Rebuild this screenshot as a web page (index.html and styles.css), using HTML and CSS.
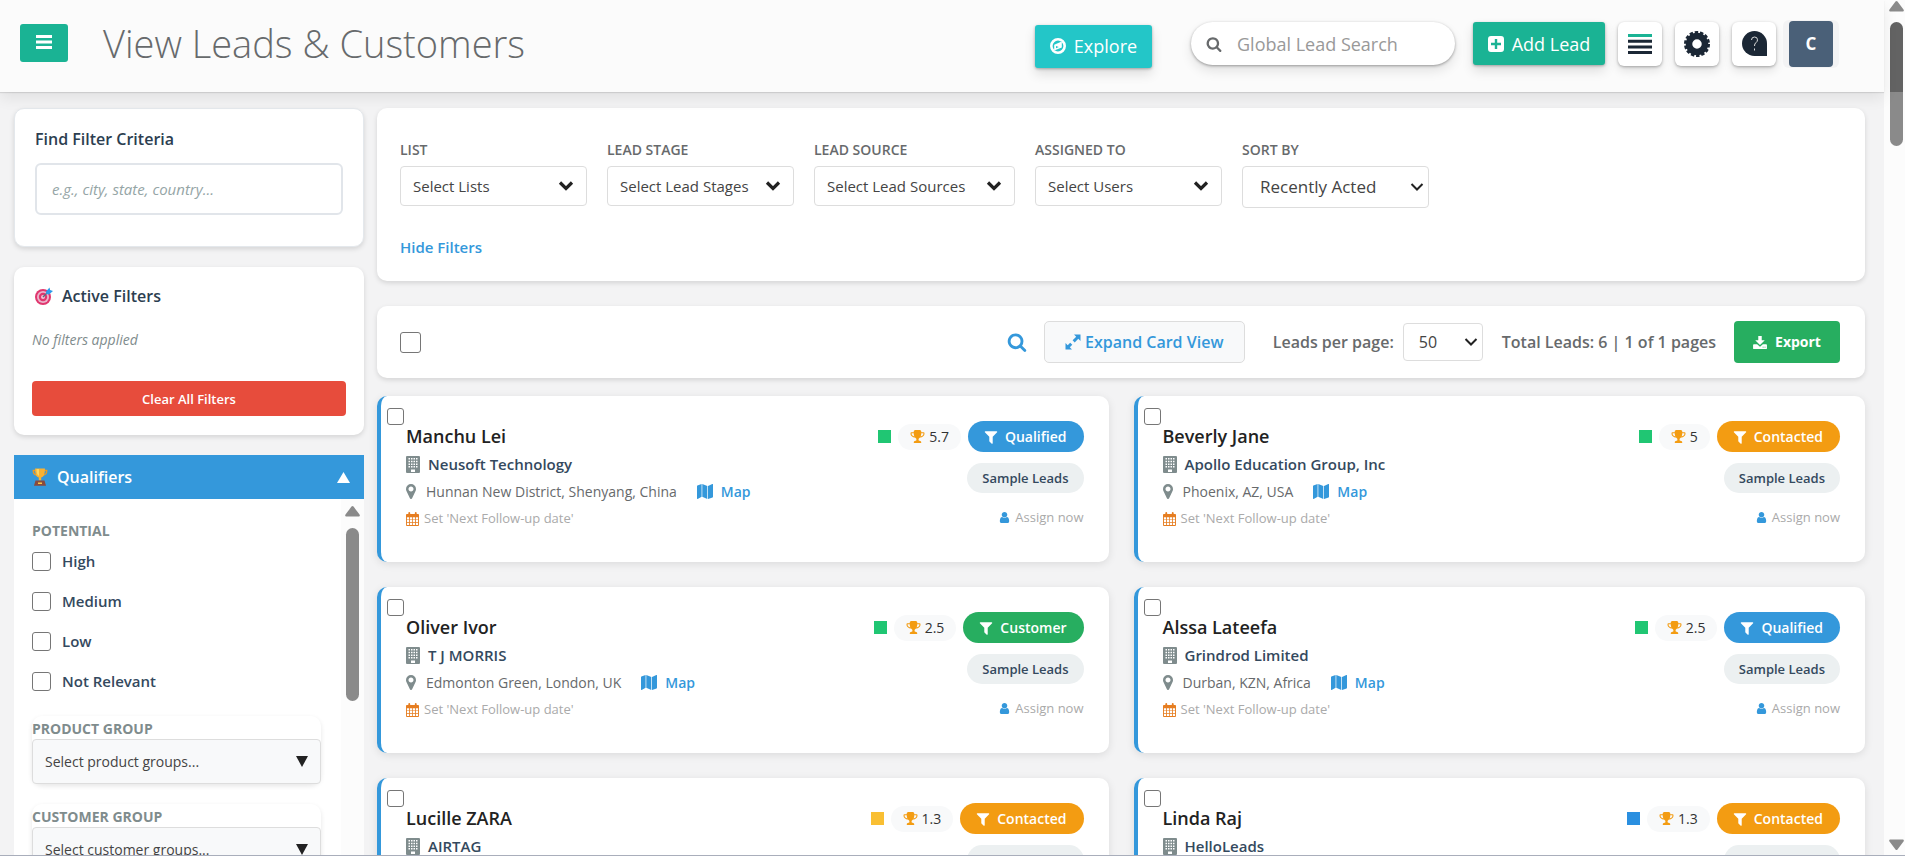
FILE: index.html
```html
<!DOCTYPE html>
<html lang="en">

<head>
  <meta charset="utf-8">
  <title>View Leads &amp; Customers</title>
  <link rel="stylesheet" href="styles.css">
</head>

<body>
  <!-- Icon sprite -->
  <svg class="sprite">
    <symbol id="i-search" viewBox="0 0 1792 1792"><path d="M1216 832q0-185-131.5-316.5t-316.5-131.5-316.5 131.5-131.5 316.5 131.5 316.5 316.5 131.5 316.5-131.5 131.5-316.5zm512 832q0 52-38 90t-90 38q-54 0-90-38l-343-342q-179 124-399 124-143 0-273.5-55.5t-225-150-150-225-55.5-273.5 55.5-273.5 150-225 225-150 273.5-55.5 273.5 55.5 225 150 150 225 55.5 273.5q0 220-124 399l343 343q37 37 37 90z"/></symbol>
    <symbol id="i-filter" viewBox="0 0 1792 1792"><path d="M1595 295q17 41-14 70l-493 493v742q0 42-39 59-13 5-25 5-27 0-45-19l-256-256q-19-19-19-45v-486l-493-493q-31-29-14-70 17-39 59-39h1280q42 0 59 39z"/></symbol>
    <symbol id="i-user" viewBox="0 0 1792 1792"><path d="M1536 1399q0 109-62.5 187t-150.5 78h-854q-88 0-150.5-78t-62.5-187q0-85 8.5-160.5t31.5-152 58.5-131 94-89 134.5-34.5q131 128 313 128t313-128q76 0 134.5 34.5t94 89 58.5 131 31.5 152 8.5 160.5zm-256-887q0 159-112.5 271.5t-271.5 112.5-271.5-112.5-112.5-271.5 112.5-271.5 271.5-112.5 271.5 112.5 112.5 271.5z"/></symbol>
    <symbol id="i-pin" viewBox="384 128 1024 1536"><path d="M1152 640q0-106-75-181t-181-75-181 75-75 181 75 181 181 75 181-75 75-181zm256 0q0 109-33 179l-364 774q-16 33-47.5 52t-67.5 19-67.5-19-46.5-52l-365-774q-33-70-33-179 0-212 150-362t362-150 362 150 150 362z"/></symbol>
    <symbol id="i-trophy" viewBox="0 0 1792 1792"><path d="M522 883q-74-162-74-371h-256v96q0 78 94.5 162t235.5 113zm1078-275v-96h-256q0 209-74 371 141-29 235.5-113t94.5-162zm128-128v128q0 71-41.5 143t-112 130-173 97.5-215.5 44.5q-42 54-95 95-38 34-52.5 72.5t-14.5 89.5q0 54 30.5 91t97.5 37q75 0 133.5 45.5t58.5 114.5v64q0 14-9 23t-23 9h-832q-14 0-23-9t-9-23v-64q0-69 58.5-114.5t133.5-45.5q67 0 97.5-37t30.5-91q0-51-14.5-89.5t-52.5-72.5q-53-41-95-95-113-5-215.5-44.5t-173-97.5-112-130-41.5-143v-128q0-40 28-68t68-28h288v-96q0-66 47-113t113-47h576q66 0 113 47t47 113v96h288q40 0 68 28t28 68z"/></symbol>
    <symbol id="i-building" viewBox="0 0 14 17"><path fill-rule="evenodd" d="M1 0h12q1 0 1 1v15q0 1-1 1H1q-1 0-1-1V1q0-1 1-1zM2.500 2v1.500h1.500V2zM5 2v1.500h1.500V2zM7.500 2v1.500H9V2zM10 2v1.500h1.500V2zM2.500 4.700v1.500h1.500V4.700zM5 4.700v1.500h1.500V4.700zM7.500 4.700v1.500H9V4.700zM10 4.700v1.500h1.500V4.700zM2.500 7.400v1.500h1.500V7.400zM5 7.400v1.500h1.500V7.400zM7.500 7.400v1.500H9V7.400zM10 7.400v1.500h1.500V7.400zM2.500 10v1.500h1.500V10zM5 10v1.500h1.500V10zM7.500 10v1.500H9V10zM10 10v1.500h1.500V10zM5 13.500V16h4v-2.500z"/></symbol>
    <symbol id="i-calendar" viewBox="0 0 14 15"><path fill-rule="evenodd" d="M1 2h1.500V1q0-1 1-1t1 1v1h5V1q0-1 1-1t1 1v1H13q1 0 1 1v11q0 1-1 1H1q-1 0-1-1V3q0-1 1-1zM1 5.500V8h2.300V5.500zM4.200 5.500V8h2.400V5.500zM7.400 5.500V8h2.400V5.500zM10.700 5.500V8H13V5.500zM1 8.700v2.300h2.300V8.700zM4.200 8.700v2.300h2.400V8.700zM7.400 8.700v2.300h2.400V8.700zM10.700 8.700v2.300H13V8.700zM1 11.800V14h2.300v-2.200zM4.200 11.800V14h2.400v-2.200zM7.400 11.800V14h2.400v-2.200zM10.700 11.800V14H13v-2.200z"/></symbol>
    <symbol id="i-map" viewBox="0 0 16 15"><path d="M0 2.200Q0 1.800.400 1.600L4.600 0v12.800L.700 14.900Q0 15 0 14.500zM5.300 0l5 2v12.900l-5-2.100zM11 2.100 15.300 0q.700-.200.700.500v12.300q0 .400-.400.600L11 15z"/></symbol>
    <symbol id="i-compass" viewBox="0 0 16 16"><path fill-rule="evenodd" d="M8 0a8 8 0 1 1 0 16A8 8 0 0 1 8 0zm0 2.600a5.400 5.400 0 1 0 0 10.800A5.400 5.400 0 0 0 8 2.600zM11.800 3.600v5.800l-7.600 3.200V6.800zM6 8v2.300L8.800 9z"/></symbol>
    <symbol id="i-plus" viewBox="0 0 16 16"><path fill-rule="evenodd" d="M3 0h10q3 0 3 3v10q0 3-3 3H3q-3 0-3-3V3q0-3 3-3zM6.800 3v3.800H3v2.400h3.800V13h2.400V9.200H13V6.800H9.200V3z"/></symbol>
    <symbol id="i-expand" viewBox="0 0 16 16"><path d="M9 .5h6.500V7l-2.200-2.200-3.600 3.600-2.100-2.100 3.600-3.600zM7 15.500H.5V9l2.200 2.200 2.500-2.500 2.100 2.100-2.500 2.500z"/></symbol>
    <symbol id="i-download" viewBox="0 0 16 15"><path fill-rule="evenodd" d="M6 0h4v5h3.500L8 10.400 2.500 5H6zM1 9.500h3.700L8 12.500l3.300-3H15q1 0 1 1V14q0 1-1 1H1q-1 0-1-1v-3.500q0-1 1-1zM11 12.300v1h1.200v-1zM13.200 12.300v1h1.200v-1z"/></symbol>
    <symbol id="i-chevron" viewBox="0 0 16 12"><path fill="none" stroke="currentColor" stroke-width="3.200" d="M2 2.500 8 8.500 14 2.500"/></symbol>
    <symbol id="i-arrow" viewBox="0 0 14 12"><path fill="none" stroke="currentColor" stroke-width="2" d="M1.500 3 7 8.500 12.500 3"/></symbol>
    <symbol id="i-triangle" viewBox="0 0 15 11"><path d="M6.500.600q1-1 2 0l6 7.900q1 2-.800 2H1.300q-1.800 0-.8-2z"/></symbol>
  </svg>

  <div class="page">
    <header class="topbar">
      <button class="menu-btn" aria-label="Menu">
        <svg width="16" height="14" viewBox="0 0 16 14"><path d="M0 0h16v3H0zM0 5.500h16v3H0zM0 11h16v3H0z"/></svg>
      </button>
      <h1>View Leads &amp; Customers</h1>
      <button class="btn explore"><svg class="icon"><use href="#i-compass"/></svg> Explore</button>
      <div class="tools">
        <label class="global-search">
          <svg class="icon"><use href="#i-search"/></svg>
          <input type="search" placeholder="Global Lead Search" aria-label="Global Lead Search">
        </label>
        <button class="btn add-lead"><svg class="icon"><use href="#i-plus"/></svg> Add Lead</button>
        <button class="tool" aria-label="List">
          <svg width="24" height="20" viewBox="0 0 24 20"><path fill="#1ab394" d="M0 0h24v3H0z"/><path d="M0 5.700h24v3H0zM0 11.400h24v3H0zM0 17h24v3H0z"/></svg>
        </button>
        <button class="tool" aria-label="Settings">
          <svg width="26" height="26" viewBox="0 0 26 26"><circle cx="13" cy="13" r="8" fill="none" stroke="currentColor" stroke-width="6.500"/><circle cx="13" cy="13" r="11.500" fill="none" stroke="currentColor" stroke-width="3" stroke-dasharray="3.400 1.760"/></svg>
        </button>
        <button class="tool" aria-label="Help">
          <svg width="25" height="25" viewBox="0 0 25 25"><path d="M12.500 0A12.500 12.500 0 0 1 25 12.500V25H12.500a12.500 12.500 0 0 1 0-25z"/><path d="M9.500 9q0-3 3-3t3 2.800q0 1.700-1.600 2.900-1.400 1-1.400 3.300M12.500 17.500v2" fill="none" stroke="#ddd" stroke-width="1"/></svg>
        </button>
        <span class="profile"><button class="avatar">C</button></span>
      </div>
    </header>

    <div class="content">
      <aside class="sidebar">
        <section class="panel find">
          <label class="panel-title" for="find">Find Filter Criteria</label>
          <input id="find" type="text" placeholder="e.g., city, state, country...">
        </section>

        <section class="panel active-filters">
          <h2 class="panel-title">
            <svg width="22" height="18" viewBox="0 0 22 18"><circle cx="11" cy="10" r="8" fill="#e0366e"/><circle cx="11" cy="10" r="6" fill="#eab4cb"/><circle cx="11" cy="10" r="4.200" fill="#e0366e"/><circle cx="11" cy="10" r="2" fill="#f3c5d6"/><path d="M11 10l6-6" stroke="#5b6b80" stroke-width="1.500"/><path d="M14 4.500 17.500.5l.6 2.500L21 4l-4 3.500-2.600-.6z" fill="#2d9bea"/></svg>
            Active Filters
          </h2>
          <p>No filters applied</p>
          <button class="clear">Clear All Filters</button>
        </section>

        <section class="qualifiers">
          <h2>
            <svg width="16" height="18" viewBox="0 0 16 18"><path d="M3.500 2.500H1.200q0 4.300 3.800 4.500M12.500 2.500h2.300q0 4.300-3.800 4.500" fill="none" stroke="#e89a28" stroke-width="1.300"/><path d="M3 .5h10q0 8.500-3.800 9v3H6.800v-3Q3 9 3 .5z" fill="#f9b233"/><path d="M4.500 1h2.500v7Q4.500 6.500 4.500 1z" fill="#fdd663"/><path d="M3.500 12.500h9l1.500 5.300H2z" fill="#8a4a3e"/><path d="M6 14.500h4V16H6z" fill="#f9c846"/></svg>
            <span>Qualifiers</span>
            <svg width="13" height="11" viewBox="0 0 13 11"><path fill="#fff" d="M6.500 0 13 11H0z"/></svg>
          </h2>
          <div class="qualifier-body">
            <div class="qualifier-list">
              <h3>Potential</h3>
              <label class="check"><input type="checkbox"> High</label>
              <label class="check"><input type="checkbox"> Medium</label>
              <label class="check"><input type="checkbox"> Low</label>
              <label class="check"><input type="checkbox"> Not Relevant</label>
              <div class="group">
                <h3><label for="product">Product Group</label></h3>
                <div class="select">
                  <select id="product"><option>Select product groups...</option></select>
                  <svg width="12" height="11" viewBox="0 0 12 11"><path d="M0 0h12L6 11z"/></svg>
                </div>
              </div>
              <div class="group">
                <h3><label for="customer">Customer Group</label></h3>
                <div class="select">
                  <select id="customer"><option>Select customer groups...</option></select>
                  <svg width="12" height="11" viewBox="0 0 12 11"><path d="M0 0h12L6 11z"/></svg>
                </div>
              </div>
            </div>
            <div class="scrollbar">
              <svg width="15" height="11"><use href="#i-triangle"/></svg>
              <span class="thumb"></span>
            </div>
          </div>
        </section>
      </aside>

      <main>
        <section class="panel filters">
          <div class="filter-row">
            <div class="field">
              <label for="list">List</label>
              <div class="select">
                <select id="list"><option>Select Lists</option></select>
                <svg width="16" height="12"><use href="#i-chevron"/></svg>
              </div>
            </div>
            <div class="field">
              <label for="stage">Lead Stage</label>
              <div class="select">
                <select id="stage"><option>Select Lead Stages</option></select>
                <svg width="16" height="12"><use href="#i-chevron"/></svg>
              </div>
            </div>
            <div class="field wide">
              <label for="source">Lead Source</label>
              <div class="select">
                <select id="source"><option>Select Lead Sources</option></select>
                <svg width="16" height="12"><use href="#i-chevron"/></svg>
              </div>
            </div>
            <div class="field">
              <label for="assigned">Assigned To</label>
              <div class="select">
                <select id="assigned"><option>Select Users</option></select>
                <svg width="16" height="12"><use href="#i-chevron"/></svg>
              </div>
            </div>
            <div class="field sort">
              <label for="sort">Sort By</label>
              <div class="select">
                <select id="sort"><option>Recently Acted</option></select>
                <svg width="14" height="12"><use href="#i-arrow"/></svg>
              </div>
            </div>
          </div>
          <a class="hide-filters" href="#">Hide Filters</a>
        </section>

        <section class="panel toolbar">
          <input class="select-all" type="checkbox" aria-label="Select all leads">
          <button class="search-btn" aria-label="Search"><svg width="20" height="20"><use href="#i-search"/></svg></button>
          <button class="expand"><svg class="icon"><use href="#i-expand"/></svg> Expand Card View</button>
          <label class="per-page" for="per-page">Leads per page:</label>
          <div class="select page-size">
            <select id="per-page"><option>50</option></select>
            <svg width="14" height="12"><use href="#i-arrow"/></svg>
          </div>
          <span class="total">Total Leads: 6 | 1 of 1 pages</span>
          <button class="export"><svg width="14" height="13"><use href="#i-download"/></svg> Export</button>
        </section>

        <div class="leads">
          <article class="lead">
            <input type="checkbox" aria-label="Select Manchu Lei">
            <div class="info">
              <h2>Manchu Lei</h2>
              <p class="company"><svg width="14" height="17"><use href="#i-building"/></svg> Neusoft Technology</p>
              <p class="place"><svg width="10" height="15"><use href="#i-pin"/></svg> Hunnan New District, Shenyang, China <a href="#"><svg width="16" height="15"><use href="#i-map"/></svg> Map</a></p>
              <p class="follow"><svg width="13" height="14"><use href="#i-calendar"/></svg> Set 'Next Follow-up date'</p>
            </div>
            <div class="status">
              <div class="badges">
                <span class="dot green"></span>
                <span class="score"><svg width="15" height="15"><use href="#i-trophy"/></svg> 5.7</span>
                <span class="stage qualified"><svg width="16" height="16"><use href="#i-filter"/></svg> Qualified</span>
              </div>
              <span class="tag">Sample Leads</span>
              <a class="assign" href="#"><svg width="13" height="13"><use href="#i-user"/></svg> Assign now</a>
            </div>
          </article>

          <article class="lead">
            <input type="checkbox" aria-label="Select Beverly Jane">
            <div class="info">
              <h2>Beverly Jane</h2>
              <p class="company"><svg width="14" height="17"><use href="#i-building"/></svg> Apollo Education Group, Inc</p>
              <p class="place"><svg width="10" height="15"><use href="#i-pin"/></svg> Phoenix, AZ, USA <a href="#"><svg width="16" height="15"><use href="#i-map"/></svg> Map</a></p>
              <p class="follow"><svg width="13" height="14"><use href="#i-calendar"/></svg> Set 'Next Follow-up date'</p>
            </div>
            <div class="status">
              <div class="badges">
                <span class="dot green"></span>
                <span class="score"><svg width="15" height="15"><use href="#i-trophy"/></svg> 5</span>
                <span class="stage contacted"><svg width="16" height="16"><use href="#i-filter"/></svg> Contacted</span>
              </div>
              <span class="tag">Sample Leads</span>
              <a class="assign" href="#"><svg width="13" height="13"><use href="#i-user"/></svg> Assign now</a>
            </div>
          </article>

          <article class="lead">
            <input type="checkbox" aria-label="Select Oliver Ivor">
            <div class="info">
              <h2>Oliver Ivor</h2>
              <p class="company"><svg width="14" height="17"><use href="#i-building"/></svg> T J MORRIS</p>
              <p class="place"><svg width="10" height="15"><use href="#i-pin"/></svg> Edmonton Green, London, UK <a href="#"><svg width="16" height="15"><use href="#i-map"/></svg> Map</a></p>
              <p class="follow"><svg width="13" height="14"><use href="#i-calendar"/></svg> Set 'Next Follow-up date'</p>
            </div>
            <div class="status">
              <div class="badges">
                <span class="dot green"></span>
                <span class="score"><svg width="15" height="15"><use href="#i-trophy"/></svg> 2.5</span>
                <span class="stage customer"><svg width="16" height="16"><use href="#i-filter"/></svg> Customer</span>
              </div>
              <span class="tag">Sample Leads</span>
              <a class="assign" href="#"><svg width="13" height="13"><use href="#i-user"/></svg> Assign now</a>
            </div>
          </article>

          <article class="lead">
            <input type="checkbox" aria-label="Select Alssa Lateefa">
            <div class="info">
              <h2>Alssa Lateefa</h2>
              <p class="company"><svg width="14" height="17"><use href="#i-building"/></svg> Grindrod Limited</p>
              <p class="place"><svg width="10" height="15"><use href="#i-pin"/></svg> Durban, KZN, Africa <a href="#"><svg width="16" height="15"><use href="#i-map"/></svg> Map</a></p>
              <p class="follow"><svg width="13" height="14"><use href="#i-calendar"/></svg> Set 'Next Follow-up date'</p>
            </div>
            <div class="status">
              <div class="badges">
                <span class="dot green"></span>
                <span class="score"><svg width="15" height="15"><use href="#i-trophy"/></svg> 2.5</span>
                <span class="stage qualified"><svg width="16" height="16"><use href="#i-filter"/></svg> Qualified</span>
              </div>
              <span class="tag">Sample Leads</span>
              <a class="assign" href="#"><svg width="13" height="13"><use href="#i-user"/></svg> Assign now</a>
            </div>
          </article>

          <article class="lead">
            <input type="checkbox" aria-label="Select Lucille ZARA">
            <div class="info">
              <h2>Lucille ZARA</h2>
              <p class="company"><svg width="14" height="17"><use href="#i-building"/></svg> AIRTAG</p>
            </div>
            <div class="status">
              <div class="badges">
                <span class="dot yellow"></span>
                <span class="score"><svg width="15" height="15"><use href="#i-trophy"/></svg> 1.3</span>
                <span class="stage contacted"><svg width="16" height="16"><use href="#i-filter"/></svg> Contacted</span>
              </div>
              <span class="tag">Sample Leads</span>
            </div>
          </article>

          <article class="lead">
            <input type="checkbox" aria-label="Select Linda Raj">
            <div class="info">
              <h2>Linda Raj</h2>
              <p class="company"><svg width="14" height="17"><use href="#i-building"/></svg> HelloLeads</p>
            </div>
            <div class="status">
              <div class="badges">
                <span class="dot blue"></span>
                <span class="score"><svg width="15" height="15"><use href="#i-trophy"/></svg> 1.3</span>
                <span class="stage contacted"><svg width="16" height="16"><use href="#i-filter"/></svg> Contacted</span>
              </div>
              <span class="tag">Sample Leads</span>
            </div>
          </article>
        </div>
      </main>
    </div>
  </div>

  <div class="scrollbar page-scroll">
    <svg width="15" height="11"><use href="#i-triangle"/></svg>
    <span class="thumb"></span>
    <svg class="down" width="15" height="11"><use href="#i-triangle"/></svg>
  </div>
</body>

</html>
```
FILE: styles.css
```css
* {
  box-sizing: border-box;
}

body {
  display: flex;
  height: 100vh;
  margin: 0;
  overflow: hidden;
  background: #f3f3f4;
  border-bottom: 1px solid #a9aebb;
  color: #676a6c;
  font: 15px/20px "Open Sans", "Noto Sans", sans-serif;
}

h1,
h2,
h3,
p {
  margin: 0;
}

a {
  color: #3498db;
  text-decoration: none;
}

button,
input,
select {
  font: inherit;
}

button {
  padding: 0;
  border: 0;
  cursor: pointer;
}

svg {
  flex: none;
  fill: currentColor;
}

.sprite {
  display: none;
}

.icon {
  width: 16px;
  height: 16px;
}

input[type="checkbox"] {
  appearance: none;
  flex: none;
  width: 17px;
  height: 17px;
  margin: 0;
  background: #fff;
  border: 1px solid #767676;
  border-radius: 3px;
}

.page {
  flex: 1;
  min-width: 0;
}

/* Top bar */
.topbar {
  position: relative;
  display: flex;
  align-items: center;
  height: 92px;
  padding: 0 45px 0 20px;
  background: #fbfbfb;
  box-shadow: 0 1px 1px rgba(0, 0, 0, .1), 0 6px 14px rgba(0, 0, 0, .08);
}

.menu-btn {
  width: 48px;
  height: 38px;
  margin-bottom: 6px;
  background: #1ab394;
  border-radius: 3px;
  color: #fff;
}

.topbar h1 {
  flex: 1;
  margin: 0 0 6px 35px;
  font-size: 38px;
  line-height: 48px;
  font-weight: 300;
}

.btn {
  display: flex;
  align-items: center;
  justify-content: center;
  gap: 8px;
  height: 43px;
  border-radius: 3px;
  box-shadow: 0 1px 3px rgba(0, 0, 0, .3), 0 6px 12px rgba(0, 0, 0, .12);
  color: #fff;
  font-size: 18px;
}

.explore {
  width: 117px;
  margin-right: 39px;
  background: #23c6c8;
}

.tools {
  display: flex;
  align-items: center;
  gap: 13px;
  padding-bottom: 5px;
}

.global-search {
  display: flex;
  align-items: center;
  gap: 15px;
  width: 264px;
  height: 43px;
  margin-right: 5px;
  padding: 0 15px;
  background: #fff;
  border-radius: 22px;
  box-shadow: 0 1px 3px rgba(0, 0, 0, .35), 0 6px 12px rgba(0, 0, 0, .1);
}

.global-search input {
  flex: 1;
  min-width: 0;
  padding: 0;
  background: none;
  border: 0;
  font-size: 18px;
}

.global-search input::placeholder {
  color: #999;
}

.add-lead {
  width: 132px;
  background: #1ab394;
}

.tool {
  display: flex;
  align-items: center;
  justify-content: center;
  width: 44px;
  height: 44px;
  background: #fff;
  border-radius: 6px;
  box-shadow: 0 1px 3px rgba(0, 0, 0, .3), 0 5px 10px rgba(0, 0, 0, .1);
  color: #1b2735;
}

.profile {
  padding: 1px 6px;
  margin-left: -6px;
  background: #f3f3f4;
  border-radius: 6px;
}

.avatar {
  width: 44px;
  height: 46px;
  background: #4a6078;
  border-radius: 4px;
  color: #fff;
  font-size: 17px;
  font-weight: 700;
}

/* Layout */
.content {
  display: grid;
  grid-template-columns: 350px 1fr;
  gap: 13px;
  padding: 16px 19px 0 14px;
}

.panel {
  background: #fff;
  border-radius: 10px;
  box-shadow: 0 2px 5px rgba(0, 0, 0, .13);
}

.panel-title {
  display: flex;
  align-items: center;
  gap: 8px;
  color: #2c3e50;
  font-size: 16px;
  line-height: 24px;
  font-weight: 600;
}

.select {
  display: grid;
  align-items: center;
}

.select select {
  grid-area: 1 / 1;
  appearance: none;
  width: 100%;
  height: 40px;
  padding: 0 12px;
  background: #fff;
  border: 1px solid #ddd;
  border-radius: 4px;
  color: #444;
}

.select svg {
  grid-area: 1 / 1;
  justify-self: end;
  margin-right: 13px;
  color: #222;
  pointer-events: none;
}

/* Sidebar */
.sidebar {
  display: flex;
  flex-direction: column;
  gap: 20px;
}

.find {
  padding: 18px 20px 31px;
  border: 1px solid #e4e8ec;
}

.find input {
  width: 100%;
  height: 52px;
  margin-top: 12px;
  padding: 0 15px;
  border: 2px solid #e1e5ea;
  border-radius: 6px;
}

.find input::placeholder {
  color: #95a5a6;
  font-style: italic;
}

.active-filters {
  padding: 17px 18px 19px;
}

.active-filters p {
  margin: 22px 0 31px;
  color: #7f8c8d;
  font-size: 14px;
  font-style: italic;
}

.clear {
  width: 100%;
  height: 35px;
  background: #e74c3c;
  border-radius: 4px;
  color: #fff;
  font-size: 13px;
  font-weight: 600;
}

.qualifiers {
  background: #fff;
}

.qualifiers h2 {
  display: flex;
  align-items: center;
  gap: 9px;
  height: 44px;
  padding: 0 14px 0 18px;
  background: #3498db;
  color: #fff;
  font-size: 16px;
  font-weight: 600;
}

.qualifiers h2 span {
  flex: 1;
}

.qualifier-body {
  display: flex;
}

.qualifier-list {
  flex: 1;
  padding: 22px 20px 0 18px;
}

.qualifiers h3 {
  color: #7f8c8d;
  font-size: 14px;
  font-weight: 700;
  text-transform: uppercase;
}

.check {
  display: flex;
  align-items: center;
  gap: 11px;
  height: 40px;
  color: #34495e;
  font-weight: 600;
}

.check input[type="checkbox"] {
  width: 19px;
  height: 19px;
}

.group {
  margin: 15px 0 20px;
  padding-top: 3px;
  border-radius: 10px;
  box-shadow: 0 2px 5px rgba(0, 0, 0, .1);
}

.group + .group {
  margin-top: 0;
}

.group .select select {
  height: 45px;
  background: #f8f9fa;
  font-size: 14px;
}

.scrollbar {
  display: flex;
  flex-direction: column;
  align-items: center;
  gap: 11px;
  width: 23px;
  padding-top: 7px;
  background: #fcfcfc;
  color: #8a8a8a;
}

.scrollbar .thumb {
  width: 13px;
  height: 173px;
  background: #8a8a8a;
  border-radius: 7px;
}

.page-scroll {
  width: 21px;
  padding: 1px 0 0 3px;
  gap: 10px;
}

.page-scroll .thumb {
  height: 124px;
  background: linear-gradient(#636363 70px, #8a8a8a 70px);
}

.page-scroll .down {
  margin-top: auto;
  margin-bottom: 5px;
  transform: rotate(180deg);
}

/* Filters */
.filters {
  padding: 32px 23px 22px;
}

.filter-row {
  display: flex;
  gap: 20px;
  align-items: flex-start;
}

.field {
  display: flex;
  flex-direction: column;
  gap: 6px;
  width: 187px;
}

.field.wide {
  width: 201px;
}

.field label {
  font-size: 14px;
  font-weight: 600;
  text-transform: uppercase;
}

.sort .select select {
  height: 42px;
  padding-left: 17px;
  font-size: 17px;
}

.sort .select svg,
.page-size svg {
  margin-right: 5px;
}

.hide-filters {
  display: inline-block;
  margin-top: 27px;
  line-height: 24px;
  font-weight: 600;
}

/* Toolbar */
.toolbar {
  display: flex;
  align-items: center;
  height: 72px;
  margin: 25px 0 18px;
  padding: 0 25px 0 23px;
  font-size: 16px;
  font-weight: 600;
}

.toolbar .select-all {
  width: 21px;
  height: 21px;
}

.search-btn {
  height: 20px;
  margin-left: auto;
  background: none;
  color: #3498db;
}

.expand {
  display: flex;
  align-items: center;
  justify-content: center;
  gap: 4px;
  width: 201px;
  height: 42px;
  margin: 0 28px 0 17px;
  background: #f8f9fa;
  border: 1px solid #ddd;
  border-radius: 5px;
  color: #3498db;
}

.page-size {
  width: 80px;
  margin: 0 19px 0 9px;
}

.page-size select {
  height: 38px;
  padding-left: 15px;
  font-weight: 400;
}

.export {
  display: flex;
  align-items: center;
  justify-content: center;
  gap: 8px;
  width: 106px;
  height: 42px;
  margin-left: 18px;
  background: #27ae60;
  border-radius: 4px;
  color: #fff;
  font-size: 14px;
  font-weight: 700;
}

/* Lead cards */
.leads {
  display: grid;
  grid-template-columns: 1fr 1fr;
  gap: 25px;
}

.lead {
  position: relative;
  display: flex;
  justify-content: space-between;
  min-height: 166px;
  padding: 25px;
  background: #fff;
  border-left: 4px solid #3498db;
  border-radius: 10px;
  box-shadow: 0 2px 8px rgba(0, 0, 0, .1);
}

.lead > input {
  position: absolute;
  top: 12px;
  left: 6px;
}

.lead h2 {
  color: #222;
  font-size: 18px;
  line-height: 30px;
  font-weight: 600;
}

.lead p {
  display: flex;
  align-items: center;
  gap: 10px;
  line-height: 27px;
  font-size: 14px;
}

.lead .company {
  gap: 8px;
  color: #34495e;
  font-size: 15px;
  font-weight: 600;
}

.company svg,
.place > svg {
  color: #7f8c8d;
}

.place a {
  display: flex;
  align-items: center;
  gap: 8px;
  margin-left: 10px;
  font-weight: 600;
}

.lead .follow {
  gap: 5px;
  color: #aaa;
  font-size: 13px;
}

.follow svg {
  color: #e67e22;
}

.status {
  display: flex;
  flex-direction: column;
  align-items: flex-end;
}

.badges {
  display: flex;
  align-items: center;
  gap: 7px;
}

.dot {
  width: 13px;
  height: 13px;
}

.green {
  background: #20c673;
}

.yellow {
  background: #f9bf33;
}

.blue {
  background: #2a8fe0;
}

.score {
  display: flex;
  align-items: center;
  gap: 4px;
  height: 26px;
  padding: 0 12px;
  background: #f8f9fa;
  border-radius: 13px;
  color: #333;
  font-size: 14px;
}

.score svg {
  color: #f39c12;
}

.stage {
  display: flex;
  align-items: center;
  gap: 6px;
  height: 31px;
  padding: 0 17px 0 15px;
  border-radius: 16px;
  color: #fff;
  font-size: 14px;
  font-weight: 600;
}

.qualified {
  background: #3498db;
}

.contacted {
  background: #f39c12;
}

.customer {
  background: #27ae60;
}

.tag {
  margin: 11px 0 14px;
  padding: 0 15px;
  background: #ecf0f1;
  border-radius: 15px;
  color: #34495e;
  font-size: 13px;
  line-height: 30px;
  font-weight: 600;
}

.assign {
  display: flex;
  align-items: center;
  gap: 4px;
  color: #aaa;
  font-size: 13px;
}

.assign svg {
  color: #3498db;
}
```
